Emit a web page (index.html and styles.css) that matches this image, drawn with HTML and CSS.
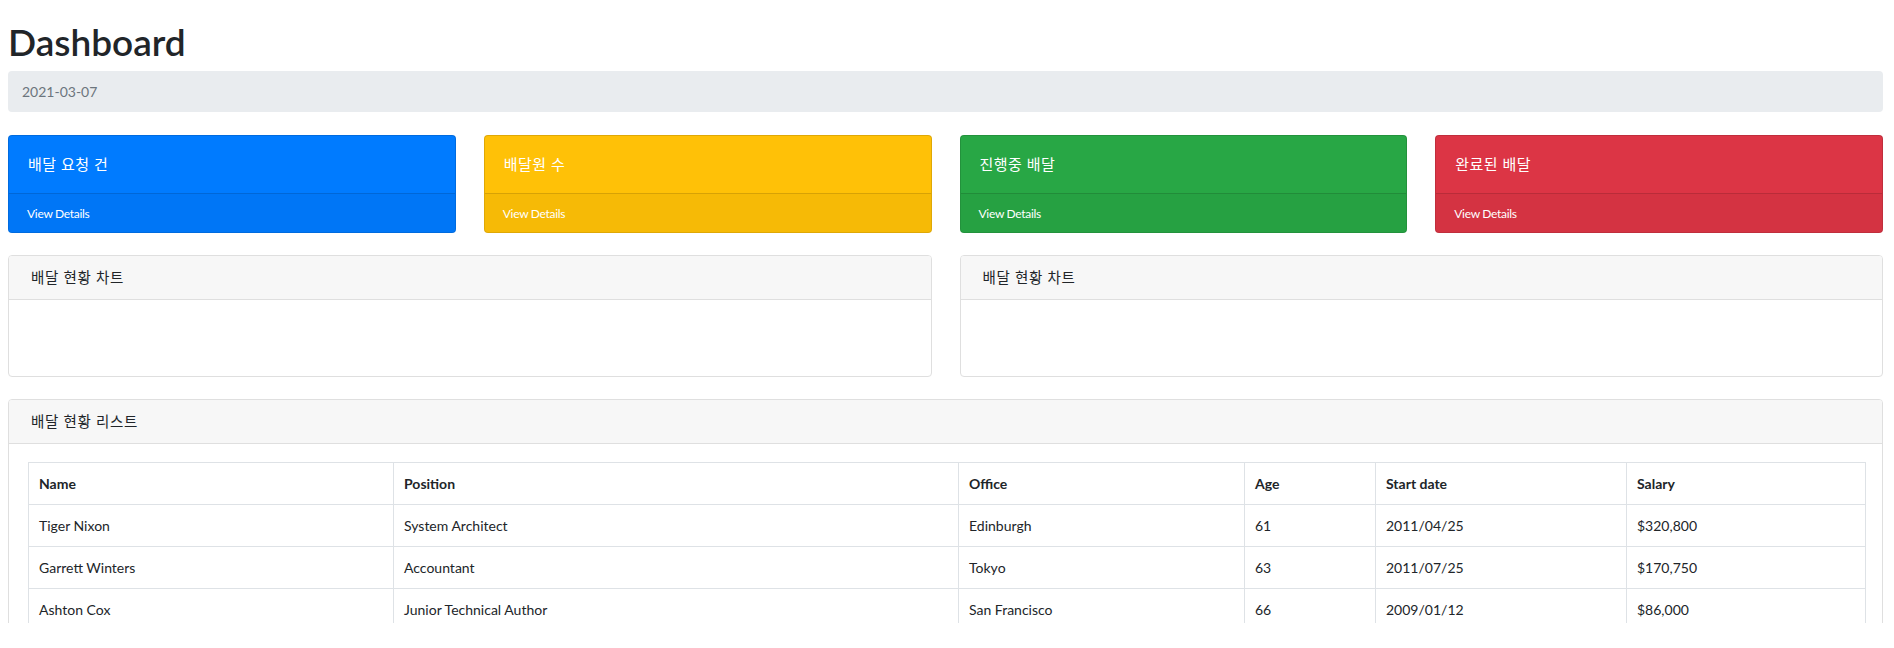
FILE: index.html
```html
<!DOCTYPE html>
<html lang="ko">
<head>
<meta charset="utf-8">
<title>Dashboard</title>
<link rel="stylesheet" href="styles.css">
</head>
<body>
<div class="page">
  <h1 class="title">Dashboard</h1>
  <div class="breadcrumb">2021-03-07</div>

  <div class="stats">
    <div class="stat stat-blue">
      <div class="stat-body">배달 요청 건</div>
      <div class="stat-footer">View Details</div>
    </div>
    <div class="stat stat-yellow">
      <div class="stat-body">배달원 수</div>
      <div class="stat-footer">View Details</div>
    </div>
    <div class="stat stat-green">
      <div class="stat-body">진행중 배달</div>
      <div class="stat-footer">View Details</div>
    </div>
    <div class="stat stat-red">
      <div class="stat-body">완료된 배달</div>
      <div class="stat-footer">View Details</div>
    </div>
  </div>

  <div class="charts">
    <div class="panel">
      <div class="panel-header">배달 현황 차트</div>
      <div class="panel-body chart-body"></div>
    </div>
    <div class="panel">
      <div class="panel-header">배달 현황 차트</div>
      <div class="panel-body chart-body"></div>
    </div>
  </div>

  <div class="panel list-panel">
    <div class="panel-header">배달 현황 리스트</div>
    <div class="panel-body list-body">
      <table class="data-table">
        <colgroup>
          <col class="c-name">
          <col class="c-pos">
          <col class="c-office">
          <col class="c-age">
          <col class="c-date">
          <col class="c-salary">
        </colgroup>
        <thead>
          <tr><th>Name</th><th>Position</th><th>Office</th><th>Age</th><th>Start date</th><th>Salary</th></tr>
        </thead>
        <tbody>
          <tr><td>Tiger Nixon</td><td>System Architect</td><td>Edinburgh</td><td>61</td><td>2011/04/25</td><td>$320,800</td></tr>
          <tr><td>Garrett Winters</td><td>Accountant</td><td>Tokyo</td><td>63</td><td>2011/07/25</td><td>$170,750</td></tr>
          <tr><td>Ashton Cox</td><td>Junior Technical Author</td><td>San Francisco</td><td>66</td><td>2009/01/12</td><td>$86,000</td></tr>
        </tbody>
      </table>
    </div>
  </div>
</div>
</body>
</html>
```

FILE: styles.css
```css
* { box-sizing: border-box; }

html, body {
  margin: 0;
  padding: 0;
  background: #fff;
}

body {
  font-family: Lato, "Noto Sans CJK KR", sans-serif;
  color: #212529;
  font-size: 14px;
}

.page {
  height: 623px;
  overflow: hidden;
  padding: 0 11px 0 8px;
}

.title {
  margin: 19px 0 0 0;
  font-size: 37px;
  line-height: 46px;
  font-weight: 600;
  color: #212529;
}

.breadcrumb {
  margin-top: 6px;
  height: 41px;
  line-height: 41px;
  padding: 0 14px;
  background: #e9ecef;
  border-radius: 4px;
  color: #6c757d;
  font-size: 14px;
}

.stats {
  margin-top: 23px;
  display: grid;
  grid-template-columns: repeat(4, 1fr);
  gap: 28px;
}

.stat {
  border: 1px solid rgba(0, 0, 0, 0.125);
  border-radius: 4px;
  color: #fff;
  overflow: hidden;
}

.stat-blue { background: #007bff; }
.stat-yellow { background: #ffc107; }
.stat-green { background: #28a745; }
.stat-red { background: #dc3545; }

.stat-body {
  height: 57px;
  display: flex;
  align-items: center;
  padding: 0 19px 2px;
  font-size: 15px;
  letter-spacing: 0.5px;
}

.stat-footer {
  height: 39px;
  border-top: 1px solid rgba(0, 0, 0, 0.125);
  background: rgba(0, 0, 0, 0.035);
  display: flex;
  align-items: center;
  padding: 0 18px;
  font-size: 12px;
  letter-spacing: -0.3px;
}

.charts {
  margin-top: 22px;
  display: grid;
  grid-template-columns: 1fr 1fr;
  gap: 28px;
}

.panel {
  border: 1px solid #dfdfdf;
  border-radius: 4px;
  background: #fff;
}

.panel-header {
  height: 44px;
  background: #f7f7f7;
  border-bottom: 1px solid #dfdfdf;
  border-radius: 3px 3px 0 0;
  display: flex;
  align-items: center;
  padding: 0 22px 2px;
  font-size: 14.5px;
  letter-spacing: 0.7px;
  color: #212529;
}

.chart-body {
  height: 76px;
}

.list-panel {
  margin-top: 22px;
}

.list-body {
  padding: 18px 16px 19px 19px;
}

.data-table {
  width: 1837px;
  table-layout: fixed;
  border-collapse: collapse;
  border: 1px solid #dee2e6;
  font-size: 14px;
}

.c-name { width: 365px; }
.c-pos { width: 565px; }
.c-office { width: 286px; }
.c-age { width: 131px; }
.c-date { width: 251px; }
.c-salary { width: 239px; }

.data-table th,
.data-table td {
  border: 1px solid #dee2e6;
  height: 42px;
  padding: 0 10px;
  text-align: left;
  vertical-align: middle;
  white-space: nowrap;
}

.data-table th {
  font-weight: 700;
}
```
